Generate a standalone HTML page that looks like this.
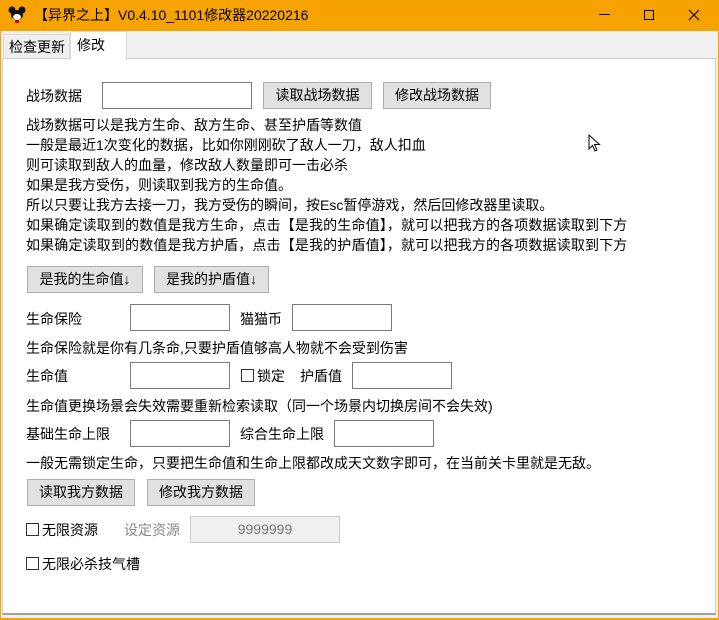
<!DOCTYPE html>
<html><head><meta charset="utf-8"><style>
*{margin:0;padding:0;box-sizing:border-box}
body{width:719px;height:620px;background:#f6a200;font-family:"Liberation Sans","Noto Sans CJK SC",sans-serif;font-size:14px;color:#000;position:relative;overflow:hidden}
.win{position:absolute;left:1px;top:31px;width:717px;height:587px;background:#f0f0f0}
.a{position:absolute;white-space:nowrap;line-height:20px}
.panel{position:absolute;left:2px;top:58px;width:714px;height:557px;background:#fff;border:1px solid #d0d0d0;border-bottom:2px solid #a0a0a0}
.in{position:absolute;background:#fff;border:1px solid #7a7a7a;height:27px}
.btn{position:absolute;background:#e1e1e1;border:1px solid #adadad;height:27px;text-align:center;line-height:25px}
.cb{position:absolute;width:13px;height:13px;border:1px solid #333;background:#fff}
.t{letter-spacing:0}
</style></head><body>
<svg style="position:absolute;left:8px;top:6px" width="18" height="18" viewBox="0 0 18 18"><circle cx="4" cy="4" r="3.5" fill="#111"/><circle cx="14" cy="4" r="3.5" fill="#111"/><ellipse cx="9" cy="9" rx="6" ry="5" fill="#111"/><ellipse cx="9" cy="11" rx="4" ry="3" fill="#fff"/><rect x="7" y="14" width="4" height="3" fill="#d00"/></svg>
<div class="a" style="left:34px;top:5px;font-size:14px">【异界之上】V0.4.10_1101修改器20220216</div>
<div style="position:absolute;left:599px;top:14px;width:11px;height:1px;background:#000"></div>
<div style="position:absolute;left:644px;top:10px;width:10px;height:10px;border:1px solid #000"></div>
<svg style="position:absolute;left:688px;top:9px" width="12" height="12"><path d="M1 1L11 11M11 1L1 11" stroke="#000" stroke-width="1.1"/></svg>
<div class="win"></div>
<div style="position:absolute;left:3px;top:34px;width:67px;height:25px;border:1px solid #d9d9d9;border-bottom:none;background:#f0f0f0"></div>
<div class="a" style="left:9px;top:37px;font-size:14px">检查更新</div>
<div style="position:absolute;left:70px;top:31px;width:57px;height:29px;border:1px solid #d9d9d9;border-bottom:none;background:#fff;z-index:2"></div>
<div class="a" style="left:77px;top:35px;z-index:3;font-size:14px">修改</div>
<div class="panel"></div>

<div class="a" style="left:26px;top:86px">战场数据</div>
<div class="in" style="left:102px;top:82px;width:150px"></div>
<div class="btn" style="left:263px;top:82px;width:109px">读取战场数据</div>
<div class="btn" style="left:383px;top:82px;width:108px">修改战场数据</div>

<div class="a t" style="left:26px;top:115px">战场数据可以是我方生命、敌方生命、甚至护盾等数值</div>
<div class="a t" style="left:26px;top:135px">一般是最近1次变化的数据，比如你刚刚砍了敌人一刀，敌人扣血</div>
<div class="a t" style="left:26px;top:155px">则可读取到敌人的血量，修改敌人数量即可一击必杀</div>
<div class="a t" style="left:26px;top:175px">如果是我方受伤，则读取到我方的生命值。</div>
<div class="a t" style="left:26px;top:195px">所以只要让我方去接一刀，我方受伤的瞬间，按Esc暂停游戏，然后回修改器里读取。</div>
<div class="a" style="left:26px;top:215px;letter-spacing:0.15px">如果确定读取到的数值是我方生命，点击【是我的生命值】，就可以把我方的各项数据读取到下方</div>
<div class="a" style="left:26px;top:235px;letter-spacing:0.15px">如果确定读取到的数值是我方护盾，点击【是我的护盾值】，就可以把我方的各项数据读取到下方</div>

<div class="btn" style="left:27px;top:266px;width:116px">是我的生命值↓</div>
<div class="btn" style="left:154px;top:266px;width:115px">是我的护盾值↓</div>

<div class="a" style="left:26px;top:309px">生命保险</div>
<div class="in" style="left:130px;top:304px;width:100px"></div>
<div class="a" style="left:240px;top:309px">猫猫币</div>
<div class="in" style="left:292px;top:304px;width:100px"></div>
<div class="a t" style="left:26px;top:338px">生命保险就是你有几条命,只要护盾值够高人物就不会受到伤害</div>

<div class="a" style="left:26px;top:366px">生命值</div>
<div class="in" style="left:130px;top:362px;width:100px"></div>
<div class="cb" style="left:241px;top:369px"></div>
<div class="a" style="left:257px;top:366px">锁定</div>
<div class="a" style="left:300px;top:366px">护盾值</div>
<div class="in" style="left:352px;top:362px;width:100px"></div>
<div class="a t" style="left:26px;top:396px">生命值更换场景会失效需要重新检索读取（同一个场景内切换房间不会失效)</div>

<div class="a" style="left:26px;top:424px">基础生命上限</div>
<div class="in" style="left:130px;top:420px;width:100px"></div>
<div class="a" style="left:240px;top:424px">综合生命上限</div>
<div class="in" style="left:334px;top:420px;width:100px"></div>
<div class="a t" style="left:26px;top:453px">一般无需锁定生命，只要把生命值和生命上限都改成天文数字即可，在当前关卡里就是无敌。</div>

<div class="btn" style="left:27px;top:479px;width:108px">读取我方数据</div>
<div class="btn" style="left:147px;top:479px;width:108px">修改我方数据</div>

<div class="cb" style="left:26px;top:523px"></div>
<div class="a" style="left:42px;top:520px">无限资源</div>
<div class="a" style="left:124px;top:520px;color:#888">设定资源</div>
<div class="in" style="left:190px;top:516px;width:150px;background:#f0f0f0;border-color:#ccc;text-align:center;line-height:25px;color:#777">9999999</div>

<div class="cb" style="left:26px;top:557px"></div>
<div class="a" style="left:42px;top:554px">无限必杀技气槽</div>

<svg style="position:absolute;left:588px;top:134px" width="14" height="20"><path d="M1 1L1 15L4.5 11.5L7 17L9 16L6.5 10.5L11.5 10.5Z" fill="#fff" stroke="#000" stroke-width="1"/></svg>
</body></html>
